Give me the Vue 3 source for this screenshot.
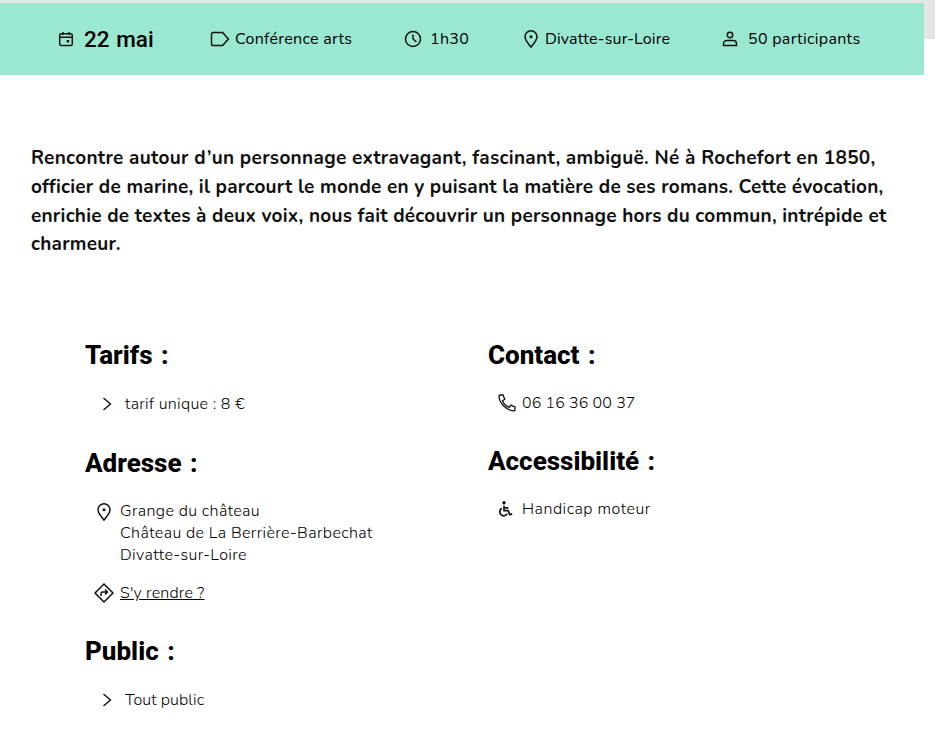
<script setup>
const lieu = ['Grange du château', 'Château de La Berrière-Barbechat', 'Divatte-sur-Loire']
</script>

<template>
  <div class="page">
    <div class="topstrip">
      <div class="banner">
        <div class="meta date">
          <svg class="ic cal" viewBox="0 0 16 16"><rect x="1.700" y="2.700" width="12.600" height="11.800" rx="1.600"/><path d="M1.700 6.200h12.600M5 1v3M11 1v3"/><rect x="8.600" y="9" width="2.600" height="2.400" class="fill"/></svg>
          <span>22 mai</span>
        </div>
        <div class="meta tag">
          <svg class="ic lbl" viewBox="0 0 20 16"><path d="M1.500 3.200A1.800 1.800 0 0 1 3.300 1.400h9.300l5.800 6.600-5.800 6.600H3.300a1.800 1.800 0 0 1-1.800-1.800z"/></svg>
          <span>Conférence arts</span>
        </div>
        <div class="meta dur">
          <svg class="ic clk" viewBox="0 0 18 18"><circle cx="9" cy="9" r="7.500"/><path d="M9 4.500V9l3.500 3"/></svg>
          <span>1h30</span>
        </div>
        <div class="meta city">
          <svg class="ic pin" viewBox="0 0 14 18"><path d="M7 17C4.600 13.800 1 10.400 1 6.800A6 6 0 0 1 13 6.800C13 10.400 9.400 13.800 7 17z"/><circle cx="7" cy="6.800" r="1.500" class="fill"/></svg>
          <span>Divatte-sur-Loire</span>
        </div>
        <div class="meta people">
          <svg class="ic usr" viewBox="0 0 16 16"><circle cx="8" cy="4" r="2.700"/><path d="M1.500 14.500v-1.800A3.200 3.200 0 0 1 4.700 9.500h6.600a3.200 3.200 0 0 1 3.200 3.200v1.800z"/></svg>
          <span>50 participants</span>
        </div>
      </div>
    </div>

    <p class="intro"><span class="lead">Rencontre autour d’un personnage extravagant, fascinant, ambiguë. Né à Rochefort en 1850,</span> officier de marine, il parcourt le monde en y puisant la matière de ses romans. Cette évocation, enrichie de textes à deux voix, nous fait découvrir un personnage hors du commun, intrépide et charmeur.</p>

    <div class="cols">
      <div class="col left">
        <h2>Tarifs :</h2>
        <div class="row chev-row first">
          <svg class="chev" viewBox="0 0 10 14"><path d="M1.500 1 8.500 7l-7 6"/></svg>
          <span>tarif unique : 8 €</span>
        </div>
        <h2 class="h-adresse">Adresse :</h2>
        <div class="addr">
          <svg class="ic pin small" viewBox="0 0 14 18"><path d="M7 17C4.600 13.800 1 10.400 1 6.800A6 6 0 0 1 13 6.800C13 10.400 9.400 13.800 7 17z"/><circle cx="7" cy="6.800" r="1.500" class="fill"/></svg>
          <div class="lines"><div v-for="l in lieu" :key="l">{{ l }}</div></div>
        </div>
        <div class="goto">
          <svg class="ic dir" viewBox="0 0 20 20"><path d="M10 1 19 10l-9 9-9-9z" stroke-linejoin="round"/><path d="M7 13v-2.500A1.500 1.500 0 0 1 8.500 9H13M11 6.500 13.500 9 11 11.500"/></svg>
          <a href="#">S'y rendre ?</a>
        </div>
        <h2 class="h-public">Public :</h2>
        <div class="row chev-row second">
          <svg class="chev" viewBox="0 0 10 14"><path d="M1.500 1 8.500 7l-7 6"/></svg>
          <span>Tout public</span>
        </div>
      </div>
      <div class="col right">
        <h2>Contact :</h2>
        <div class="row contact">
          <svg class="ic tel" viewBox="0 0 18 18"><path d="M2 1h3l1.800 4.200-2.300 1.600c1 2.800 3.600 5.300 6.700 6.600l1.600-2.300 4.200 1.800v3c0 .6-.5 1-1 1C8.500 16.500 1.200 9.300 1 2c0-.5.400-1 1-1z"/></svg>
          <span>06 16 36 00 37</span>
        </div>
        <h2 class="h-acc">Accessibilité :</h2>
        <div class="row access">
          <svg class="ic chair" viewBox="0 0 16 16"><circle cx="7" cy="1.700" r="1.700" class="fill"/><path d="M7 4.500V9.700h4.300l1.500 4 2.400-.8M7 6.800h4.500M4.800 7.300a4 4 0 1 0 5.600 5.200" stroke-width="1.700"/></svg>
          <span>Handicap moteur</span>
        </div>
      </div>
    </div>
  </div>
</template>

<style>
html, body { margin: 0; background: #fff; }
</style>

<style scoped>
.page { width: 935px; height: 741px; overflow: hidden; font-family: "Nunito", "Lato", "Noto Sans", sans-serif; color: #000; font-size: 16px; font-weight: 300; }
.topstrip { background: linear-gradient(#e5e5e5, #e5e5e5) no-repeat 0 0 / 100% 39px; padding-top: 3px; }
.banner { width: 924px; height: 72px; background: #9ae8d2; display: flex; align-items: center; box-sizing: border-box; padding-left: 58px; }
.meta { display: flex; align-items: center; letter-spacing: .3px; font-weight: 400; }
.date { font-family: Roboto, sans-serif; font-size: 22.500px; font-weight: 500; letter-spacing: 0; word-spacing: 1px; color: #000; width: 151px; }
.tag { width: 194px; }
.dur { width: 119px; }
.city { width: 199px; letter-spacing: .14px; }
.ic { fill: none; stroke: #111; stroke-width: 1.500; flex: none; }
.ic .fill { fill: #111; stroke: none; }
.cal { width: 16px; height: 16px; margin-right: 10px; }
.lbl { width: 20px; height: 16px; margin: 0 5px 0 1px; }
.clk { width: 18px; height: 18px; margin: 0 8px 0 1px; }
.pin { width: 14px; height: 18px; margin: 0 7px 0 2px; }
.usr { width: 16px; height: 16px; margin: 0 10px 0 1px; }
.intro { margin: 69px 0 0 31px; width: 870px; font-size: 19px; line-height: 28.800px; font-weight: 700; color: #111; letter-spacing: .23px; }
.lead { letter-spacing: .3px; }
.cols { display: grid; grid-template-columns: 403px 1fr; padding: 80px 0 0 85px; }
h2 { margin: 0; font-family: Roboto, sans-serif; font-weight: 800; font-size: 26px; line-height: 32px; color: #000; letter-spacing: 0; word-spacing: 2px; }
.row { display: flex; align-items: center; line-height: 22px; }
.chev { width: 10px; height: 14px; fill: none; stroke: #111; stroke-width: 1.400; margin-right: 13px; margin-left: 17px; }
.first { margin-top: 22px; letter-spacing: .3px; }
.h-adresse { margin-top: 32px; }
.addr { display: flex; margin: 21px 0 0 12px; line-height: 22px; letter-spacing: .38px; }
.pin.small { margin: 3px 9px 0 0; }
.goto { display: flex; align-items: center; margin: 16px 0 0 9px; letter-spacing: .2px; line-height: 22px; }
.dir { width: 20px; height: 20px; margin-right: 6px; }
.goto a { color: #000; text-decoration: underline; }
.h-public { margin-top: 31px; }
.second { margin-top: 22px; letter-spacing: .1px; }
.contact { margin: 21px 0 0 10px; letter-spacing: .1px; }
.tel { width: 18px; height: 18px; margin-right: 6px; stroke-width: 1.300; }
.h-acc { margin-top: 31px; }
.access { margin: 21px 0 0 9px; letter-spacing: .5px; }
.chair { width: 16px; height: 16px; margin-right: 9px; }
</style>
